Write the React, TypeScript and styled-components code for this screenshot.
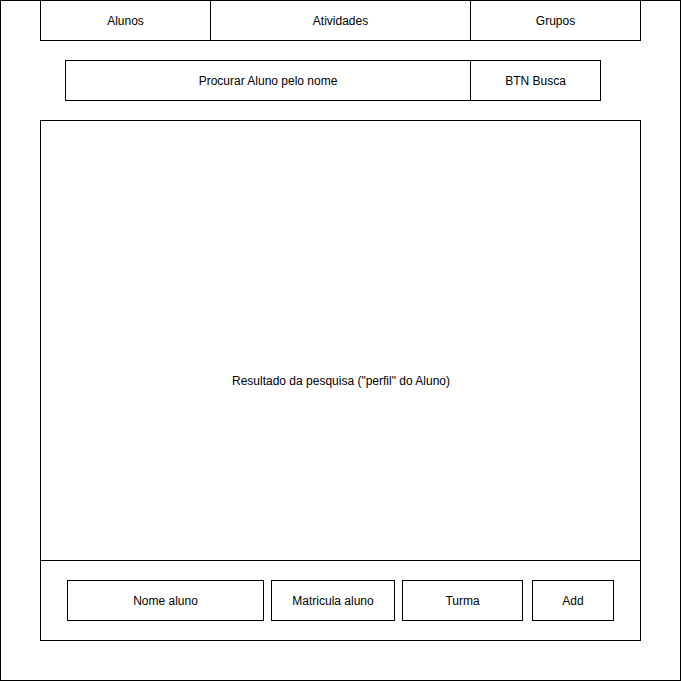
import React from "react"
import styled, { createGlobalStyle } from "styled-components"

const GlobalStyle = createGlobalStyle`
  html, body {
    margin: 0;
    padding: 0;
    background: #fff;
  }
  * {
    box-sizing: border-box;
  }
`

const Frame = styled.div`
  width: 681px;
  height: 681px;
  border: 1px solid #000;
  padding: 0 39px;
  font-family: "Liberation Sans", Arial, sans-serif;
  font-size: 12px;
  color: #000;
  display: flex;
  flex-direction: column;
`

const Nav = styled.nav`
  display: grid;
  grid-template-columns: 170px 260px 171px;
  width: 601px;
  height: 40px;
`

const Tab = styled.div<{ $last?: boolean }>`
  display: flex;
  align-items: center;
  justify-content: center;
  border-left: 1px solid #000;
  border-bottom: 1px solid #000;
  border-right: ${(p) => (p.$last ? "1px solid #000" : "none")};
`

const SearchRow = styled.div`
  display: flex;
  margin: 19px 0 0 25px;
  height: 41px;
`

const SearchInput = styled.div`
  width: 405px;
  display: flex;
  align-items: center;
  justify-content: center;
  border: 1px solid #000;
  border-right: none;
`

const SearchButton = styled.div`
  width: 131px;
  display: flex;
  align-items: center;
  justify-content: center;
  border: 1px solid #000;
`

const ResultBox = styled.section`
  margin-top: 19px;
  width: 601px;
  height: 521px;
  border: 1px solid #000;
  display: flex;
  flex-direction: column;
`

/* text is centred on the whole box, the footer sits over its lower part */
const ResultArea = styled.div`
  height: 439px;
  display: flex;
  align-items: center;
  justify-content: center;
  padding: 80px 0 0 1px;
`

const Footer = styled.div`
  flex: 1;
  border-top: 1px solid #000;
  display: flex;
  align-items: center;
  padding-left: 26px;
`

const FieldButton = styled.div<{ $w: number; $gap?: number }>`
  width: ${(p) => p.$w}px;
  height: 41px;
  margin-left: ${(p) => p.$gap ?? 0}px;
  border: 1px solid #000;
  display: flex;
  align-items: center;
  justify-content: center;
`

export default function App() {
  return (
    <>
      <GlobalStyle />
      <Frame>
        <Nav>
          <Tab>Alunos</Tab>
          <Tab>Atividades</Tab>
          <Tab $last>Grupos</Tab>
        </Nav>
        <SearchRow>
          <SearchInput>Procurar Aluno pelo nome</SearchInput>
          <SearchButton>BTN Busca</SearchButton>
        </SearchRow>
        <ResultBox>
          <ResultArea>Resultado da pesquisa ("perfil" do Aluno)</ResultArea>
          <Footer>
            <FieldButton $w={197}>Nome aluno</FieldButton>
            <FieldButton $w={124} $gap={7}>Matricula aluno</FieldButton>
            <FieldButton $w={121} $gap={7}>Turma</FieldButton>
            <FieldButton $w={82} $gap={9}>Add</FieldButton>
          </Footer>
        </ResultBox>
      </Frame>
    </>
  )
}
